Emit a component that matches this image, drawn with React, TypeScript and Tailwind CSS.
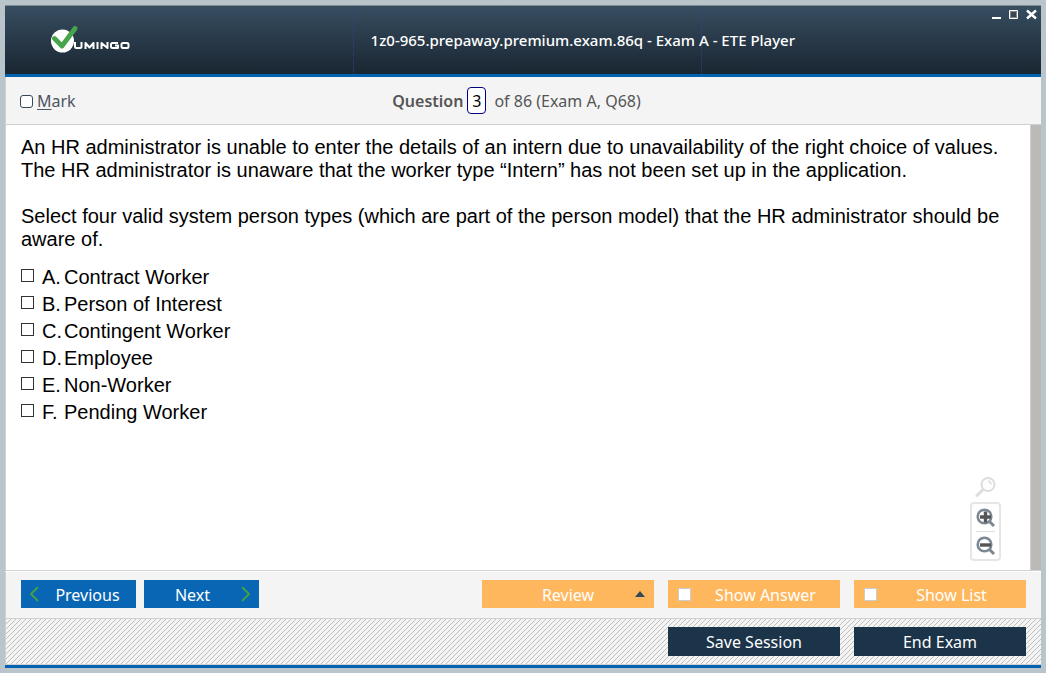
import { useState } from "react";

const ANSWERS = [
  ["A.", "Contract Worker"],
  ["B.", "Person of Interest"],
  ["C.", "Contingent Worker"],
  ["D.", "Employee"],
  ["E.", "Non-Worker"],
  ["F.", "Pending Worker"],
];

function Logo() {
  return (
    <div className="flex items-start" aria-label="Vumingo">
      <svg width="28" height="28" viewBox="0 0 28 28" aria-hidden="true">
        <circle cx="12.500" cy="15" r="11.500" fill="#fff" />
        <path d="M4.500 12.500 L12 20 L25 2.500" fill="none" stroke="#45a548" strokeWidth="4.800" strokeLinecap="round" strokeLinejoin="round" />
      </svg>
      <svg width="58" height="28" viewBox="0 0 58 28" className="-ml-1" aria-hidden="true">
        <g fill="none" stroke="#fff" strokeWidth="2" strokeLinejoin="round">
          <path d="M1 16v4.500q0 1.500 1.500 1.500h3.500q1.500 0 1.500-1.500v-4.500" />
          <path d="M11.500 23v-6l4 4.500 4-4.500v6" />
          <path d="M23.500 16v7" />
          <path d="M27.500 23v-6l6 5v-6" />
          <path d="M44 17h-5.500q-1.500 0-1.500 1.500v2q0 1.500 1.500 1.500h5.500v-2.500h-3" />
          <path d="M49 17h4q1.500 0 1.500 1.500v2q0 1.500-1.500 1.500h-4q-1.500 0-1.500-1.500v-2q0-1.500 1.500-1.500z" />
        </g>
      </svg>
    </div>
  );
}

function WindowButtons() {
  return (
    <div className="flex items-start gap-2 pt-[2px] pr-1">
      <button aria-label="Minimize" className="h-3 w-[9px]">
        <svg width="9" height="11" viewBox="0 0 9 11"><path d="M0 8h9v2H0z" fill="#fff" /></svg>
      </button>
      <button aria-label="Maximize" className="h-3 w-[9px]">
        <svg width="9" height="11" viewBox="0 0 9 11">
          <path d="M.5 1.500h8v8h-8z" fill="none" stroke="#fff" />
          <path d="M1.500 2.500h6v6h-6z" fill="none" stroke="#8b8b85" />
        </svg>
      </button>
      <button aria-label="Close" className="h-3 w-[11px]">
        <svg width="11" height="11" viewBox="0 0 11 11"><path d="M1 1.500l9 8M10 1.500l-9 8" stroke="#fff" strokeWidth="2.400" /></svg>
      </button>
    </div>
  );
}

function Lens({ kind }: { kind: "plus" | "minus" }) {
  return (
    <svg width="20" height="20" viewBox="0 0 20 20" fill="none">
      <circle cx="8.500" cy="8.500" r="6.800" stroke="#7b8893" strokeWidth="2.600" />
      <path d="M13.500 13.500l4.500 4.500" stroke="#7b8893" strokeWidth="3" />
      <path d={kind === "plus" ? "M4 9h11M9.500 3.500v11" : "M4 9h11"} stroke="#555" strokeWidth="3.400" />
    </svg>
  );
}

function Hatching() {
  return (
    <svg className="absolute inset-0 size-full" shapeRendering="crispEdges" aria-hidden="true">
      <defs>
        <pattern id="hatch" width="5" height="5" patternUnits="userSpaceOnUse">
          <path d="M4 0h1v1h-1zM3 1h1v1h-1zM2 2h1v1h-1zM1 3h1v1h-1zM0 4h1v1h-1z" fill="#bfbfbf" />
        </pattern>
      </defs>
      <rect width="100%" height="100%" fill="url(#hatch)" />
    </svg>
  );
}

export default function App() {
  const [checked, setChecked] = useState<string[]>([]);
  const toggle = (key: string) =>
    setChecked((old) => (old.includes(key) ? old.filter((k) => k !== key) : [...old, key]));

  return (
    <div className="flex min-h-screen flex-col bg-[#b9c5cb] p-[5px] font-['Noto_Sans',sans-serif]">
      <div className="flex grow flex-col border-b-[3px] border-[#0462b3] bg-[#f4f4f4]">
        <header className="grid h-[72px] grid-cols-[348px_2fr_1fr] border-t border-b-[3px] border-t-[#7f8c92] border-b-[#0462b3] bg-linear-to-b from-[#374e61] to-[#1a2632]">
          <div className="pt-5 pl-[45px]"><Logo /></div>
          <div className="relative flex items-center justify-center border-l border-dotted border-[#34407a]">
            <div className="absolute inset-y-0 left-[347px] border-l border-dotted border-[#34407a]" />
            <h1 className="relative text-[15px] leading-5 font-medium whitespace-nowrap text-white">
              1z0-965.prepaway.premium.exam.86q - Exam A - ETE Player
            </h1>
          </div>
          <div className="flex justify-end"><WindowButtons /></div>
        </header>

        <div className="grid h-12 grid-cols-[1fr_2fr_1fr] items-center border-b border-l border-[#d0d0d0] text-base text-[#555]">
          <label className="flex items-center gap-1 pt-px pl-[14px] text-[#4b5563]">
            <input type="checkbox" className="size-[13px] appearance-none rounded-[3px] border border-[#34495a] bg-white checked:bg-[#34495a]" />
            <span><span className="underline underline-offset-2">M</span>ark</span>
          </label>
          <div className="flex items-center justify-center pr-[14px] text-base">
            <label htmlFor="question" className="font-semibold">Question</label>
            <input id="question" defaultValue="3" className="mr-2 ml-1 h-[27px] w-[19px] rounded-[4px] border border-[#000080] bg-white text-center text-base text-black" />
            <span>of 86 (Exam A, Q68)</span>
          </div>
        </div>

        <main className="flex grow border-b border-l border-[#d0d0d0] bg-white">
          <section className="flex grow flex-col pt-[11px] pb-[9px] pl-[15px] font-['Liberation_Sans',sans-serif] text-xl leading-[23px] text-black">
            <p>
              An HR administrator is unable to enter the details of an intern due to unavailability of the right choice of values.
              <br />
              The HR administrator is unaware that the worker type “Intern” has not been set up in the application.
            </p>
            <p className="mt-[23px]">
              Select four valid system person types (which are part of the person model) that the HR administrator should be
              <br />
              aware of.
            </p>
            <ul className="mt-[13px]">
              {ANSWERS.map(([letter, text]) => (
                <li key={letter}>
                  <label className="flex h-[27px] items-center">
                    <input
                      type="checkbox"
                      checked={checked.includes(letter)}
                      onChange={() => toggle(letter)}
                      className="mr-2 mb-1 size-[13px] appearance-none border border-[#333] bg-white checked:bg-[#333]"
                    />
                    <span className="w-[22px]">{letter}</span>
                    <span>{text}</span>
                  </label>
                </li>
              ))}
            </ul>
            <div className="mt-auto mr-[29px] flex flex-col items-center gap-[5px] self-end">
              <button aria-label="Reset zoom">
                <svg width="21" height="20" viewBox="0 0 21 20" fill="none" stroke="#ddd">
                  <circle cx="13" cy="7.500" r="6.500" strokeWidth="2" />
                  <path d="M8 12.500L2 18.500" strokeWidth="3" strokeLinecap="round" />
                  <path d="M13 4q3 .5 3 3.500" strokeWidth="1.500" />
                </svg>
              </button>
              <div className="flex w-[31px] flex-col items-center rounded-[4px] border-2 border-[#e6e6e6]">
                <button aria-label="Zoom in" className="flex h-[27px] items-center"><Lens kind="plus" /></button>
                <hr className="w-[19px] border-[#ddd]" />
                <button aria-label="Zoom out" className="flex h-[27px] items-center"><Lens kind="minus" /></button>
              </div>
            </div>
          </section>
          <div className="w-[11px] shrink-0 border-l border-[#d0d0d0] bg-[#bbbab6]" />
        </main>

        <div className="flex h-12 items-center justify-between border-t border-b border-l border-t-white border-b-[#d0d0d0] border-l-[#d0d0d0] px-[15px] pb-[2px] text-base text-white">
          <div className="flex gap-2">
            <button className="flex h-7 w-[115px] items-center bg-[#0866b5] px-2">
              <svg width="10" height="16" viewBox="0 0 10 16" fill="none"><path d="M9 1L2 8l7 7" stroke="#43a047" strokeWidth="2" /></svg>
              <span className="grow pt-[2px] pl-2 text-center">Previous</span>
            </button>
            <button className="flex h-7 w-[115px] items-center bg-[#0866b5] px-2">
              <span className="grow pt-[2px] pr-2 text-center">Next</span>
              <svg width="10" height="16" viewBox="0 0 10 16" fill="none"><path d="M1 1l7 7-7 7" stroke="#43a047" strokeWidth="2" /></svg>
            </button>
          </div>
          <div className="flex gap-[14px]">
            <button className="flex h-7 w-[172px] items-center bg-[#ffb75d] px-[9px]">
              <span className="grow pt-[2px] pl-[10px] text-center">Review</span>
              <svg width="10" height="6" viewBox="0 0 10 6"><path d="M0 6l5-6 5 6z" fill="#34495a" /></svg>
            </button>
            {["Show Answer", "Show List"].map((text) => (
              <label key={text} className="flex h-7 w-[172px] items-center bg-[#ffb75d] px-[10px]">
                <input type="checkbox" className="size-[13px] appearance-none border border-[#ccc] bg-white checked:bg-[#34495a]" />
                <span className="grow pt-[2px] pl-[10px] text-center">{text}</span>
              </label>
            ))}
          </div>
        </div>

        <div className="relative flex h-[46px] items-center justify-end gap-[14px] border-b border-l border-[#d0d0d0] pr-[15px] text-base text-white">
          <Hatching />
          <button className="relative h-[29px] w-[172px] bg-[#1b344a]">Save Session</button>
          <button className="relative h-[29px] w-[172px] bg-[#1b344a]">End Exam</button>
        </div>
      </div>
    </div>
  );
}
